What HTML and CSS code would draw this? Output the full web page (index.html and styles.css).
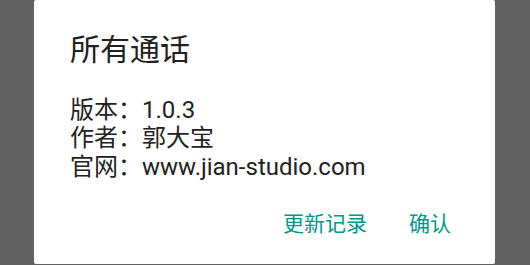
FILE: index.html
```html
<!DOCTYPE html>
<html lang="zh-CN">
<head>
<meta charset="utf-8">
<title>所有通话</title>
<link rel="stylesheet" href="styles.css">
</head>
<body>
<div class="dialog">
  <div class="title">所有通话</div>
  <div class="content">
    <div class="line">版本：1.0.3</div>
    <div class="line">作者：郭大宝</div>
    <div class="line">官网：www.jian-studio.com</div>
  </div>
  <div class="actions">
    <span class="btn">更新记录</span>
    <span class="btn">确认</span>
  </div>
</div>
</body>
</html>
```
FILE: styles.css
```css
html, body {
  margin: 0;
  padding: 0;
}
body {
  width: 530px;
  height: 265px;
  overflow: hidden;
  background: #616161;
  font-family: Roboto, "Noto Sans CJK SC", sans-serif;
}
.dialog {
  margin-left: 34px;
  width: 461px;
  height: 264px;
  background: #ffffff;
  border-radius: 2px;
  padding-top: 32px;
  box-sizing: border-box;
}
.title {
  padding: 0 36px;
  font-size: 30px;
  line-height: 36px;
  color: #212121;
}
.content {
  margin-top: 27.5px;
  padding: 0 36px;
  font-size: 24px;
  line-height: 28.5px;
  color: #222222;
}
.actions {
  margin-top: 25px;
  display: flex;
  justify-content: flex-end;
  gap: 42px;
  padding-right: 44px;
}
.btn {
  font-size: 21px;
  line-height: 36px;
  color: #009688;
}
```
